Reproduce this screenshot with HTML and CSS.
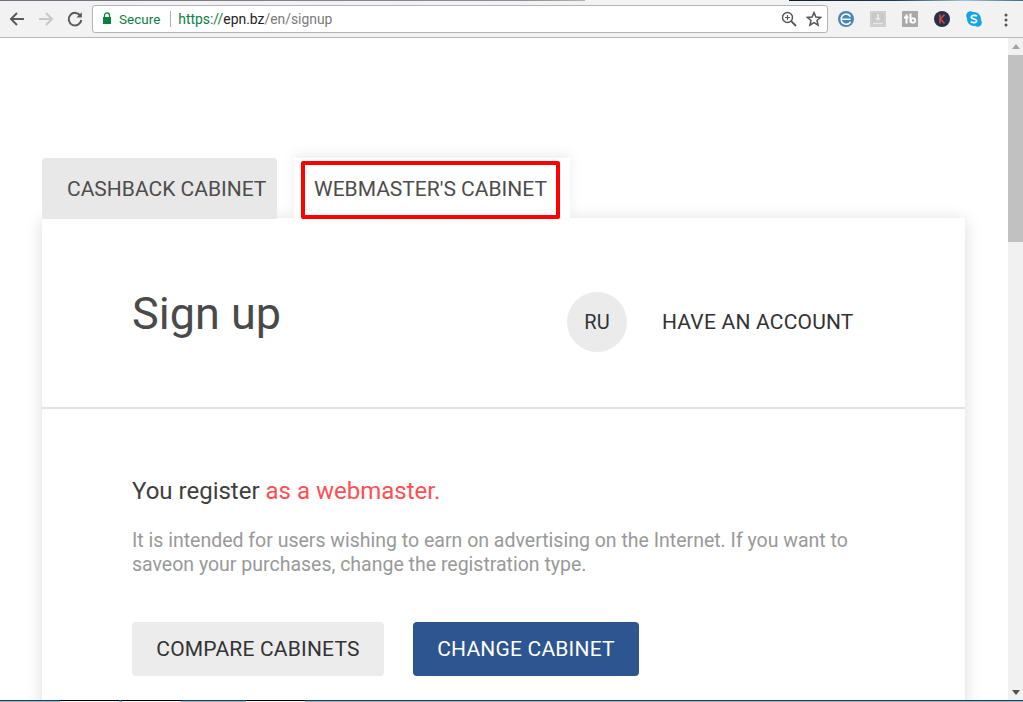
FILE: index.html
```
<!DOCTYPE html>
<html lang="en">
<head>
<meta charset="utf-8">
<title>Sign up</title>
<link rel="stylesheet" href="styles.css">
</head>
<body>
<div class="window">
  <div class="topline"><span class="topline-a"></span><span class="topline-b"></span></div>
  <header class="toolbar">
    <svg class="nav" width="18" height="18" viewBox="0 0 18 18"><path d="M16 9H3M9 3L3 9l6 6" fill="none" stroke="#5a5a5a" stroke-width="2"/></svg>
    <svg class="nav" width="18" height="18" viewBox="0 0 18 18"><path d="M2 9h13M9 3l6 6-6 6" fill="none" stroke="#c8c8c8" stroke-width="2"/></svg>
    <svg class="nav" width="18" height="18" viewBox="0 0 18 18"><path d="M14.5 6A6.3 6.3 0 1 0 15.3 10" fill="none" stroke="#5a5a5a" stroke-width="2"/><path d="M15.8 2.2v5.4h-5.4z" fill="#5a5a5a"/></svg>
    <div class="omnibox">
      <svg class="lock" width="10" height="12" viewBox="0 0 10 12"><path d="M2.5 5V3.4a2.5 2.5 0 0 1 5 0V5" fill="none" stroke="#0b8043" stroke-width="1.3"/><rect x="1" y="5" width="8" height="7" fill="#0b8043"/></svg>
      <span class="secure">Secure</span>
      <span class="sep"></span>
      <span class="url"><span class="scheme">https://</span><span class="host">epn.bz</span>/en/signup</span>
      <span class="grow"></span>
      <svg class="omni-icon" width="16" height="16" viewBox="0 0 16 16"><circle cx="6.5" cy="6.5" r="5" fill="none" stroke="#555" stroke-width="1.4"/><path d="M10.2 10.2L15 15" stroke="#555" stroke-width="1.8"/><path d="M4 6.5h5M6.5 4v5" stroke="#555" stroke-width="1.1"/></svg>
      <svg class="omni-icon" width="16" height="16" viewBox="0 0 16 16"><path d="M8 1.6l1.9 4.4 4.7.4-3.6 3.1 1.1 4.7L8 11.7l-4.1 2.5L5 9.5 1.4 6.4l4.7-.4z" fill="none" stroke="#555" stroke-width="1.5"/></svg>
    </div>
    <div class="extensions">
      <svg width="16" height="16" viewBox="0 0 16 16"><circle cx="8" cy="8" r="8" fill="#4a84bd"/><path d="M3 8.2h9.6M12.5 5.6A5 5 0 0 0 3.2 8a5 5 0 0 0 9.4 2.6" fill="none" stroke="#fff" stroke-width="1.6"/></svg>
      <svg width="16" height="16" viewBox="0 0 16 16"><rect width="16" height="16" fill="#c9c9c9"/><rect x="1" y="1" width="14" height="14" fill="none" stroke="#d6d6d6"/><path d="M8 3v5" stroke="#e8e8e8" stroke-width="2"/><path d="M5 7h6L8 10z" fill="#e8e8e8"/><path d="M3 12.5h10" stroke="#e8e8e8" stroke-width="1.5"/></svg>
      <svg width="16" height="16" viewBox="0 0 16 16"><rect width="16" height="16" rx="1" fill="#a9a9a9"/><path d="M2 6.5h4.500M4.500 3.500V12.500" stroke="#fff" stroke-width="2" fill="none"/><path d="M8.500 2.500v9" stroke="#fff" stroke-width="2"/><circle cx="11" cy="9.500" r="2.200" fill="none" stroke="#fff" stroke-width="1.800"/></svg>
      <svg width="16" height="16" viewBox="0 0 16 16"><circle cx="8" cy="8" r="8" fill="#25304a"/><path d="M6 3.500v9M10.500 3.500L6.500 8l4 4.500" fill="none" stroke="#d9423f" stroke-width="1.600"/></svg>
      <svg width="16" height="16" viewBox="0 0 16 16"><circle cx="4.500" cy="4.500" r="4.300" fill="#12a5e6"/><circle cx="11.500" cy="11.500" r="4.300" fill="#12a5e6"/><circle cx="8" cy="8" r="7" fill="#12a5e6"/><path d="M11 5.300C10 4 5.500 4 5.300 6c-.2 2.400 5.600 1.500 5.400 4-.2 2-5 2-5.900.5" fill="none" stroke="#fff" stroke-width="1.700"/></svg>
    </div>
    <svg class="menu" width="4" height="14" viewBox="0 0 4 14"><circle cx="2" cy="2" r="1.500" fill="#555"/><circle cx="2" cy="7" r="1.500" fill="#555"/><circle cx="2" cy="12" r="1.500" fill="#555"/></svg>
  </header>
  <div class="viewport">
    <main class="page">
      <nav class="tabs">
        <a class="tab tab-off">CASHBACK CABINET</a>
        <a class="tab tab-on"><span class="mark">WEBMASTER'S CABINET</span></a>
      </nav>
      <section class="card">
        <div class="card-head">
          <h1>Sign up</h1>
          <span class="lang">RU</span>
          <a class="login">HAVE AN ACCOUNT</a>
        </div>
        <div class="card-body">
          <p class="lead">You register <span class="accent">as a webmaster.</span></p>
          <p class="note">It is intended for users wishing to earn on advertising on the Internet. If you want to saveon your purchases, change the registration type.</p>
          <div class="actions">
            <a class="btn btn-grey">COMPARE CABINETS</a>
            <a class="btn btn-blue">CHANGE CABINET</a>
          </div>
        </div>
      </section>
    </main>
    <aside class="scrollbar">
      <span class="arrow-up"></span>
      <span class="thumb"></span>
      <span class="grow"></span>
      <span class="arrow-down"></span>
    </aside>
  </div>
  <div class="taskbar"><span class="task"></span><span class="task"></span><span class="task task-far"></span></div>
</div>
</body>
</html>
```
FILE: styles.css
```
* { box-sizing: border-box; }
html, body { margin: 0; height: 100%; overflow: hidden; }
body { font-family: Roboto, "Liberation Sans", sans-serif; background: #fff; color: #444; }
.window { display: flex; flex-direction: column; height: 702px; width: 1023px; }
.topline { height: 1px; background: #f2f2f2; display: flex; flex: none; }
.topline-a { width: 585px; background: linear-gradient(90deg, #6f7278, #8d9096 90%, #b0b3b8); }
.topline-b { margin-left: 204px; width: 234px; background: linear-gradient(90deg, #141c2c, #1c3a58 45%, #a6c4d4 75%, #3d6c84); }
.toolbar { flex: none; height: 37px; background: #f2f2f2; border-bottom: 1px solid #b8b8b8; display: flex; align-items: center; padding: 0 0 0 8px; }
.nav { margin-right: 11px; flex: none; }
.omnibox { width: 736px; height: 28px; margin-left: -3px; background: #fff; border: 1px solid #b4b4b4; border-radius: 3px; display: flex; align-items: center; padding-left: 9px; font: 13.5px Roboto, sans-serif; }
.lock { flex: none; margin-top: -2px; }
.secure { color: #0b8043; margin-left: 7px; }
.sep { width: 1px; height: 16px; background: #b0b0b0; margin: 0 7px 0 10px; }
.url { color: #7a7a7a; font-size: 13.9px; }
.scheme { color: #0b8043; }
.host { color: #222; }
.grow { flex: 1; }
.omni-icon { flex: none; margin-right: 5px; margin-left: 4px; }
.extensions { display: flex; gap: 16px; margin-left: 10px; }
.menu { margin-left: 22px; margin-top: 1px; }
.viewport { flex: 1; display: flex; min-height: 0; overflow: hidden; }
.page { width: 1008px; flex: none; padding: 120px 0 0 42px; }
.tabs { position: relative; z-index: 1; display: flex; height: 61px; margin-bottom: -1px; }
.tab { font-size: 21px; color: #4d4d4d; display: flex; align-items: center; }
.tab-off { width: 235px; padding-left: 25px; background: #e8e8e8; border-radius: 3px 3px 0 0; }
.tab-on { width: 276px; margin-left: 17px; background: #fff; padding: 3px 0 0 7px; box-shadow: 0 -4px 12px rgba(0,0,0,.07); height: 60px; }
.mark { width: 259px; height: 58px; padding: 0 0 2px 9px; border: 4px solid #f00; border-radius: 2px; display: flex; align-items: center; white-space: nowrap; margin-bottom: -1px; }
.card { position: relative; width: 923px; height: 600px; background: #fff; box-shadow: 0 2px 16px rgba(0,0,0,.14); }
.card-head { height: 191px; border-bottom: 2px solid #e2e2e2; display: flex; align-items: flex-start; padding: 74px 0 0 90px; }
h1 { margin: -3px 0 0; font-size: 45px; font-weight: 400; color: #4a4a4a; line-height: 50px; width: 435px; }
.lang { width: 60px; height: 60px; border-radius: 50%; background: #ebebeb; color: #333; font-size: 20px; display: flex; align-items: center; justify-content: center; }
.login { font-size: 21px; letter-spacing: .2px; color: #333; margin: 18px 0 0 35px; line-height: 24px; white-space: nowrap; }
.card-body { padding: 68px 0 0 90px; }
.lead { margin: 0; font-size: 24px; line-height: 28px; color: #3f3f3f; }
.accent { color: #ff4f52; }
.note { margin: 24px 0 0; width: 730px; font-size: 19.5px; line-height: 24px; color: #999; }
.actions { display: flex; gap: 29px; margin-top: 45px; }
.btn { height: 54px; border-radius: 4px; font-size: 21px; letter-spacing: .2px; display: flex; align-items: center; justify-content: center; }
.btn-grey { width: 252px; background: #ececec; color: #333; }
.btn-blue { width: 226px; background: #2d5590; color: #fff; }
.scrollbar { width: 15px; flex: none; background: #f1f1f1; display: flex; flex-direction: column; align-items: center; }
.arrow-up { margin-top: 6px; border: 4px solid transparent; border-top: 0; border-bottom: 5px solid #a3a3a3; width: 0; height: 0; }
.thumb { width: 100%; height: 187px; margin-top: 6px; background: #c1c1c1; }
.arrow-down { margin-bottom: 5px; border: 4px solid transparent; border-bottom: 0; border-top: 5px solid #505050; width: 0; height: 0; }
.taskbar { flex: none; height: 2px; display: flex; padding-left: 60px; gap: 3px; background: linear-gradient(#1c3f63 50%, #8fb6ca 50%); }
.task { width: 59px; height: 2px; background: linear-gradient(#000 50%, #f4f6f7 50%); }
.task-far { margin-left: 62px; }
```
